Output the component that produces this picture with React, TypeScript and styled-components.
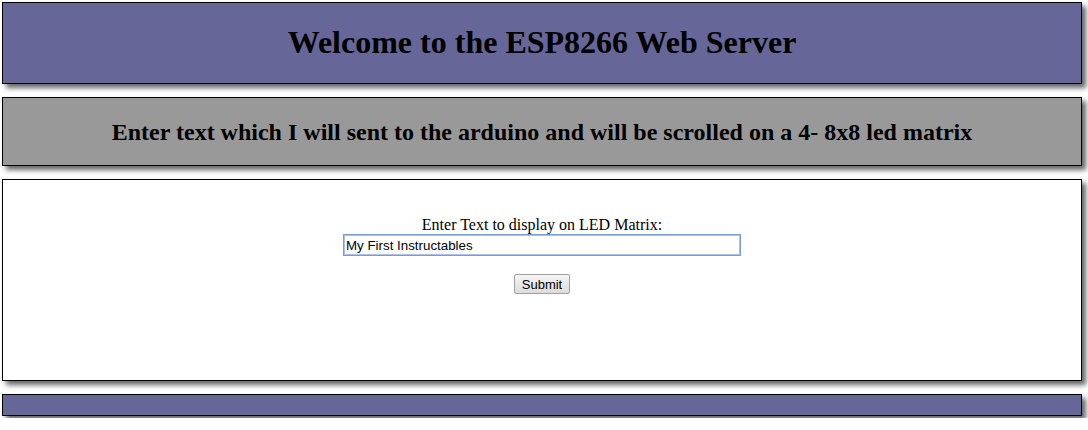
import React from 'react'
import styled, { createGlobalStyle } from 'styled-components'

const Global = createGlobalStyle`
    body {
        margin: 0;
        background: #fff;
        font-family: "Liberation Serif", "Times New Roman", serif;
    }
`

const Page = styled.div`
    display: flex;
    flex-direction: column;
    gap: 13px;
    padding: 2px 6px 2px 2px;
`

const Panel = styled.div<{ bg: string; h: number }>`
    box-sizing: border-box;
    height: ${p => p.h}px;
    background: ${p => p.bg};
    border: 1px solid #000;
    box-shadow: 4px 4px 5px #666;
    display: flex;
    flex-direction: column;
    align-items: center;
`

const Title = styled.h1`
    margin: 0;
    margin-top: 21px;
    font-size: 32px;
    line-height: 37px;
    font-weight: bold;
    color: #000;
`

const Subtitle = styled.h2`
    margin: 0;
    margin-top: 20px;
    font-size: 24px;
    line-height: 28px;
    font-weight: bold;
    color: #000;
`

const Form = styled.form`
    display: flex;
    flex-direction: column;
    align-items: center;
    padding-top: 36px;
`

const Label = styled.label`
    font-size: 16px;
    line-height: 18px;
    color: #000;
`

const TextInput = styled.input`
    box-sizing: border-box;
    width: 398px;
    height: 22px;
    border: 1px solid #7a9cd3;
    outline: 1px solid #a9c1ec;
    outline-offset: -2px;
    padding: 1px 2px;
    font-family: "Liberation Sans", Arial, sans-serif;
    font-size: 13.33px;
    color: #000;
`

const Button = styled.button`
    margin-top: 18px;
    height: 20px;
    padding: 0 7px;
    font-family: "Liberation Sans", Arial, sans-serif;
    font-size: 13px;
    color: #000;
    background: linear-gradient(#f5f5f5, #dcdcdc);
    border: 1px solid #a0a0a0;
    border-radius: 2px;
`

export default function App() {
    return (
        <>
            <Global />
            <Page>
                <Panel bg="#666699" h={82}>
                    <Title>Welcome to the ESP8266 Web Server</Title>
                </Panel>
                <Panel bg="#999999" h={69}>
                    <Subtitle>Enter text which I will sent to the arduino and will be scrolled on a 4- 8x8 led matrix</Subtitle>
                </Panel>
                <Panel bg="#ffffff" h={202}>
                    <Form onSubmit={e => e.preventDefault()}>
                        <Label htmlFor="msg">Enter Text to display on LED Matrix:</Label>
                        <TextInput id="msg" defaultValue="My First Instructables" />
                        <Button type="submit">Submit</Button>
                    </Form>
                </Panel>
                <Panel bg="#666699" h={22} />
            </Page>
        </>
    )
}
